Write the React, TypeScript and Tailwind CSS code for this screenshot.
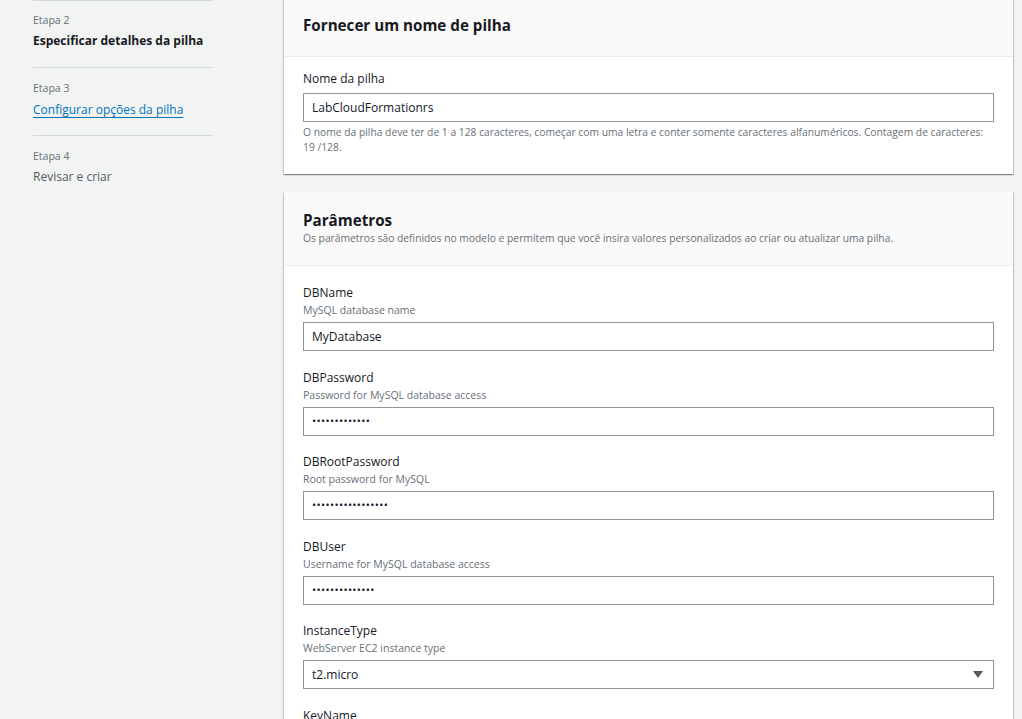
import React from "react";

const fields = [
  { name: "DBName", desc: "MySQL database name", value: "MyDatabase" },
  { name: "DBPassword", desc: "Password for MySQL database access", dots: 13 },
  { name: "DBRootPassword", desc: "Root password for MySQL", dots: 17 },
  { name: "DBUser", desc: "Username for MySQL database access", dots: 14 },
  { name: "InstanceType", desc: "WebServer EC2 instance type", value: "t2.micro", select: true },
  { name: "KeyName", desc: "Name of an existing EC2 KeyPair", value: "" },
];

function Field({ f }: { f: (typeof fields)[number] }) {
  return (
    <div className="mb-[17.5px]">
      <div className="text-[12px] leading-[18px] text-[#16191f]">{f.name}</div>
      <div className="mt-px text-[10.5px] leading-[15px] text-[#687078]">{f.desc}</div>
      <div className="mt-[4px] h-[29px] border border-[#8d9696] bg-white flex items-center pl-[8px] pr-[10px]">
        {f.dots ? (
          <span className="text-[11px] tracking-[0.35px] text-[#16191f]">{"•".repeat(f.dots)}</span>
        ) : (
          <span className="flex-1 text-[12px] text-[#16191f]">{f.value}</span>
        )}
        {f.select && (
          <svg width="10" height="7" viewBox="0 0 10 7" className="ml-auto">
            <path d="M0 0 H10 L5 7 Z" fill="#545b64" />
          </svg>
        )}
      </div>
    </div>
  );
}

export default function App() {
  return (
    <div className="min-h-screen bg-[#f2f3f3] flex overflow-hidden font-['Open_Sans',sans-serif] text-[#16191f]">
      {/* Steps */}
      <div className="ml-[33px] w-[180px] shrink-0 border-t border-[#d5dbdb]">
        <div className="pt-[11px] pb-[17px] border-b border-[#d5dbdb]">
          <div className="text-[10.5px] leading-[16px] text-[#687078]">Etapa 2</div>
          <div className="mt-[4px] text-[12px] leading-[18px] font-bold">Especificar detalhes da pilha</div>
        </div>
        <div className="pt-[12px] pb-[15px] border-b border-[#d5dbdb]">
          <div className="text-[10.5px] leading-[16px] text-[#687078]">Etapa 3</div>
          <a className="mt-[4px] inline-block text-[12px] leading-[18px] text-[#0073bb] underline underline-offset-[3px]">
            Configurar opções da pilha
          </a>
        </div>
        <div className="pt-[12px]">
          <div className="text-[10.5px] leading-[16px] text-[#687078]">Etapa 4</div>
          <div className="mt-[4px] text-[12px] leading-[18px] text-[#545b64]">Revisar e criar</div>
        </div>
      </div>

      {/* Main */}
      <div className="ml-[71px] w-[729px] shrink-0 flex flex-col gap-[18px] -mt-[6px]">
        <div className="bg-white shadow-[0_1px_1px_0_rgba(0,28,36,0.3),1px_1px_1px_0_rgba(0,28,36,0.15),-1px_1px_1px_0_rgba(0,28,36,0.15)]">
          <div className="bg-[#fafafa] border-b border-[#eaeded] px-[19px] pt-[20px] pb-[20px]">
            <h2 className="text-[15.2px] leading-[22px] font-bold">Fornecer um nome de pilha</h2>
          </div>
          <div className="px-[19px] pt-[13px] pb-[19px]">
            <div className="text-[12px] leading-[18px]">Nome da pilha</div>
            <div className="mt-[5px] h-[29px] border border-[#8d9696] flex items-center pl-[8px]">
              <span className="text-[12px]">LabCloudFormationrs</span>
            </div>
            <p className="mt-[3px] text-[10.3px] leading-[15px] text-[#687078]">
              O nome da pilha deve ter de 1 a 128 caracteres, começar com uma letra e conter somente caracteres alfanuméricos. Contagem de caracteres: 19 /128.
            </p>
          </div>
        </div>

        <div className="bg-white shadow-[0_1px_1px_0_rgba(0,28,36,0.3),1px_1px_1px_0_rgba(0,28,36,0.15),-1px_1px_1px_0_rgba(0,28,36,0.15)]">
          <div className="bg-[#fafafa] border-b border-[#eaeded] px-[19px] pt-[17px] pb-[19px]">
            <h2 className="text-[15.2px] leading-[22px] font-bold">Parâmetros</h2>
            <p className="text-[10.3px] leading-[15px] text-[#687078]">
              Os parâmetros são definidos no modelo e permitem que você insira valores personalizados ao criar ou atualizar uma pilha.
            </p>
          </div>
          <div className="px-[19px] pt-[18px]">
            {fields.map((f) => (
              <Field key={f.name} f={f} />
            ))}
          </div>
        </div>
      </div>
    </div>
  );
}
